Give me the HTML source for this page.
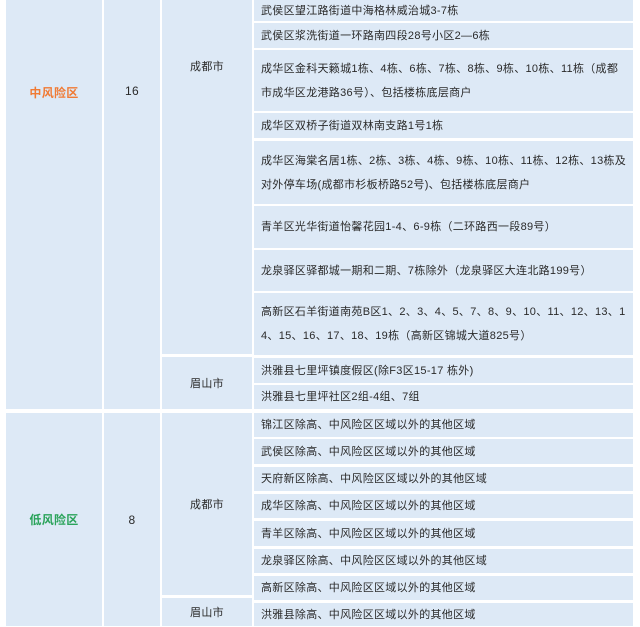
<!DOCTYPE html>
<html><head><meta charset="utf-8"><style>
body{margin:0;width:640px;height:626px;background:#fff;overflow:hidden;position:relative;font-family:"Liberation Sans","Noto Sans CJK SC",sans-serif;font-size:11px;letter-spacing:0.3px;color:#2a2a2a}
.c{position:absolute;background:#dde9f6;display:flex;align-items:center;box-sizing:border-box}
.m{justify-content:center;text-align:center}
.top{align-items:flex-start}
.t{padding-left:7px;line-height:24px;padding-right:4px}
</style></head><body>
<div class="c m top" style="left:6px;top:0;width:96px;height:409px;color:#f07a34;font-weight:bold;font-size:12px;padding-top:84px">中风险区</div>
<div class="c m top" style="left:104px;top:0;width:56px;height:409px;font-size:12px;padding-top:84px">16</div>
<div class="c m top" style="left:162px;top:0;width:90px;height:354px;padding-top:58px">成都市</div>
<div class="c m" style="left:162px;top:357px;width:90px;height:52px">眉山市</div>

<div class="c t" style="left:254px;top:0;width:379px;height:21px">武侯区望江路街道中海格林威治城3-7栋</div>
<div class="c t" style="left:254px;top:23px;width:379px;height:25px">武侯区浆洗街道一环路南四段28号小区2—6栋</div>
<div class="c t" style="left:254px;top:50px;width:379px;height:61px">成华区金科天籁城1栋、4栋、6栋、7栋、8栋、9栋、10栋、11栋（成都市成华区龙港路36号）、包括楼栋底层商户</div>
<div class="c t" style="left:254px;top:113px;width:379px;height:25px">成华区双桥子街道双林南支路1号1栋</div>
<div class="c t" style="left:254px;top:141px;width:379px;height:63px">成华区海棠名居1栋、2栋、3栋、4栋、9栋、10栋、11栋、12栋、13栋及对外停车场(成都市杉板桥路52号)、包括楼栋底层商户</div>
<div class="c t" style="left:254px;top:206px;width:379px;height:42px">青羊区光华街道怡馨花园1-4、6-9栋（二环路西一段89号）</div>
<div class="c t" style="left:254px;top:250px;width:379px;height:41px">龙泉驿区驿都城一期和二期、7栋除外（龙泉驿区大连北路199号）</div>
<div class="c t" style="left:254px;top:293px;width:379px;height:62px;word-break:break-all">高新区石羊街道南苑B区1、2、3、4、5、7、8、9、10、11、12、13、14、15、16、17、18、19栋（高新区锦城大道825号）</div>
<div class="c t" style="left:254px;top:358px;width:379px;height:25px">洪雅县七里坪镇度假区(除F3区15-17 栋外)</div>
<div class="c t" style="left:254px;top:385px;width:379px;height:24px">洪雅县七里坪社区2组-4组、7组</div>

<div class="c m" style="left:6px;top:413px;width:96px;height:213px;color:#2aa35a;font-weight:bold;font-size:12px">低风险区</div>
<div class="c m" style="left:104px;top:413px;width:56px;height:213px;font-size:12px">8</div>
<div class="c m" style="left:162px;top:413px;width:90px;height:182px">成都市</div>
<div class="c m" style="left:162px;top:598px;width:90px;height:28px">眉山市</div>

<div class="c t" style="left:254px;top:413px;width:379px;height:24px">锦江区除高、中风险区区域以外的其他区域</div>
<div class="c t" style="left:254px;top:439px;width:379px;height:25px">武侯区除高、中风险区区域以外的其他区域</div>
<div class="c t" style="left:254px;top:467px;width:379px;height:24px">天府新区除高、中风险区区域以外的其他区域</div>
<div class="c t" style="left:254px;top:494px;width:379px;height:24px">成华区除高、中风险区区域以外的其他区域</div>
<div class="c t" style="left:254px;top:521px;width:379px;height:25px">青羊区除高、中风险区区域以外的其他区域</div>
<div class="c t" style="left:254px;top:549px;width:379px;height:24px">龙泉驿区除高、中风险区区域以外的其他区域</div>
<div class="c t" style="left:254px;top:576px;width:379px;height:24px">高新区除高、中风险区区域以外的其他区域</div>
<div class="c t" style="left:254px;top:603px;width:379px;height:23px">洪雅县除高、中风险区区域以外的其他区域</div>
</body></html>
